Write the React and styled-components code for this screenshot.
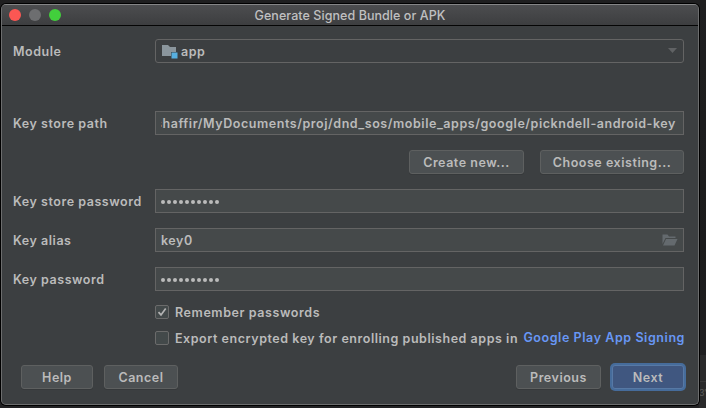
import React from "react";
import styled, { createGlobalStyle } from "styled-components";

const GlobalStyle = createGlobalStyle`
  * { box-sizing: border-box; }
  html, body { margin: 0; height: 100%; overflow: hidden; background: #1d1d1e; }
  body { font-family: Inter, "Liberation Sans", sans-serif; font-size: 13px; color: #bbbbbb; }
`;

const Desktop = styled.div`
  position: relative;
  width: 706px;
  height: 408px;
  padding: 4px 0 0 1px;
  overflow: hidden;
  background: linear-gradient(#1f1f20, #1b1b1c 60%, #222224);
`;

const EditorStrip = styled.div`
  position: absolute;
  right: 0;
  top: 355px;
  width: 7px;
  height: 53px;
  background: #2a2a2b;
`;

const EditorLine = styled.div`
  height: 27px;
  border-bottom: 1px solid #393939;
`;

const EditorText = styled.div`
  font-size: 9px;
  line-height: 22px;
  letter-spacing: -0.5px;
  color: #5c5c5c;
`;

const Dialog = styled.section`
  position: relative;
  display: flex;
  flex-direction: column;
  width: 698px;
  height: 401px;
  border: 1px solid #6c6d6e;
  border-top-color: #858687;
  border-radius: 5px;
  overflow: hidden;
  background: #3c3f41;
  box-shadow: 0 0 0 1px #000;
`;

const TitleBar = styled.header`
  display: grid;
  grid-template-columns: 60px 1fr 60px;
  align-items: center;
  height: 21px;
  flex: none;
  padding: 0 7px;
  border-bottom: 1px solid #050505;
  background: linear-gradient(#4c4d4f, #3d3e40);
`;

const Lights = styled.div`
  display: flex;
  gap: 8px;
`;

const Light = styled.span`
  width: 12px;
  height: 12px;
  border-radius: 50%;
  background: ${(p) => p.$color};
`;

const Text = styled.span`
  padding-top: 2px;
  font-size: 12.5px;
  font-weight: 600;
  letter-spacing: ${(p) => p.$track ?? 0.53}px;
  line-height: 16px;
  white-space: pre;
`;

const Title = styled(Text)`
  justify-self: center;
  font-weight: 500;
  color: #c0c0c1;
`;

const Body = styled.main`
  display: flex;
  flex-direction: column;
  flex: 1;
  padding: 13px 14px 0 11px;
`;

const Row = styled.div`
  display: grid;
  grid-template-columns: 142px 529px;
  align-items: center;
  height: 24px;
  flex: none;
  margin-bottom: ${(p) => p.$after}px;
`;

const Field = styled.div`
  display: flex;
  align-items: center;
  height: 24px;
  padding: 0 5px;
  border: 1px solid #646464;
  background: #45494a;
`;

const Combo = styled(Field)`
  gap: 3px;
  padding: 0 6px;
  border-radius: 3px;
  background: #3c3f41;
`;

const ComboArrow = styled.svg`
  margin-left: auto;
`;

const PathView = styled.div`
  display: flex;
  justify-content: flex-end;
  width: 515px;
  overflow: hidden;
`;

const Dots = styled.div`
  display: flex;
  gap: 2px;
  padding-top: 2px;
`;

const Dot = styled.i`
  width: 4px;
  height: 4px;
  border-radius: 50%;
  background: #bbbbbb;
`;

const BrowseIcon = styled.svg`
  margin-left: auto;
`;

const ButtonRow = styled.div`
  display: flex;
  justify-content: flex-end;
  gap: 16px;
  margin-bottom: 15px;
`;

const Button = styled.button`
  display: flex;
  align-items: center;
  justify-content: center;
  width: ${(p) => p.$width}px;
  height: 24px;
  padding: 0;
  font-family: inherit;
  color: #bbbbbb;
  border: 1px solid #5e6060;
  border-radius: 3px;
  background: #4c5052;
  box-shadow: 0 1px 0 #36393b;
`;

const PrimaryButton = styled(Button)`
  border-color: #5779a5;
  background: #405780;
  box-shadow: 0 0 0 2px #466c9b;
`;

const CheckRow = styled.label`
  display: flex;
  align-items: center;
  height: 14px;
  margin: 0 0 12px 142px;
`;

const CheckBox = styled.span`
  display: flex;
  flex: none;
  width: 14px;
  height: 14px;
  margin-right: 6px;
  border: 1px solid #6b6b6b;
  border-radius: 2px;
  background: #43494a;
`;

const Link = styled(Text)`
  padding-top: 0;
  margin-left: auto;
  margin-right: -1px;
  color: #6897f5;
`;

const Footer = styled.footer`
  display: flex;
  margin: 8px 0 0 8px;
`;

const FooterGap = styled.div`
  width: ${(p) => p.$width}px;
`;

const ModuleIcon = () => (
  <svg width="16" height="16" viewBox="0 0 16 16">
    <path d="M0 2h6l2 2h6v5H9v4H0z" fill="#8b969d" />
    <path d="M9.5 9.5h6v6h-6z" fill="#57afdf" />
  </svg>
);

const PasswordField = () => (
  <Field>
    <Dots>
      {Array.from({ length: 10 }, (_, i) => <Dot key={i} />)}
    </Dots>
  </Field>
);

export default function App() {
  return (
    <>
      <GlobalStyle />
      <Desktop>
        <EditorStrip>
          <EditorLine />
          <EditorText>3'</EditorText>
        </EditorStrip>
        <Dialog>
          <TitleBar>
            <Lights>
              <Light $color="#fc5753" />
              <Light $color="#6d6e70" />
              <Light $color="#42cf3c" />
            </Lights>
            <Title $track={0.06}>Generate Signed Bundle or APK</Title>
          </TitleBar>
          <Body>
            <Row $after={48}>
              <Text>Module</Text>
              <Combo>
                <ModuleIcon />
                <Text>app</Text>
                <ComboArrow width="9" height="6" viewBox="0 0 9 6">
                  <path d="M0 0h9L4.500 5z" fill="#606264" />
                </ComboArrow>
              </Combo>
            </Row>
            <Row $after={15}>
              <Text>Key store path</Text>
              <Field>
                <PathView>
                  <Text $track={0.55}>shaffir/MyDocuments/proj/dnd_sos/mobile_apps/google/pickndell-android-key</Text>
                </PathView>
              </Field>
            </Row>
            <ButtonRow>
              <Button $width={115}><Text>Create new...</Text></Button>
              <Button $width={144}><Text>Choose existing...</Text></Button>
            </ButtonRow>
            <Row $after={15}>
              <Text>Key store password</Text>
              <PasswordField />
            </Row>
            <Row $after={15}>
              <Text>Key alias</Text>
              <Field>
                <Text>key0</Text>
                <BrowseIcon width="16" height="12" viewBox="0 0 16 12">
                  <path d="M0.500 0.500h5l1.500 2h6.500v1.500H3.500L0.500 10z" fill="#646a6e" />
                  <path d="M4 5h11.500l-3 6.500H1z" fill="#646a6e" />
                </BrowseIcon>
              </Field>
            </Row>
            <Row $after={14}>
              <Text>Key password</Text>
              <PasswordField />
            </Row>
            <CheckRow>
              <CheckBox>
                <svg width="12" height="12" viewBox="0 0 12 12">
                  <path d="M2.500 6.200l2.500 2.700L9.700 2.600" fill="none" stroke="#b4b4b4" strokeWidth="1.700" />
                </svg>
              </CheckBox>
              <Text $track={0.58}>Remember passwords</Text>
            </CheckRow>
            <CheckRow>
              <CheckBox />
              <Text $track={0.54}>Export encrypted key for enrolling published apps in</Text>
              <Link $track={0.57}>Google Play App Signing</Link>
            </CheckRow>
            <Footer>
              <Button $width={72}><Text>Help</Text></Button>
              <FooterGap $width={11} />
              <Button $width={74}><Text>Cancel</Text></Button>
              <FooterGap $width={338} />
              <Button $width={85}><Text>Previous</Text></Button>
              <FooterGap $width={11} />
              <PrimaryButton $width={72}><Text>Next</Text></PrimaryButton>
            </Footer>
          </Body>
        </Dialog>
      </Desktop>
    </>
  );
}
